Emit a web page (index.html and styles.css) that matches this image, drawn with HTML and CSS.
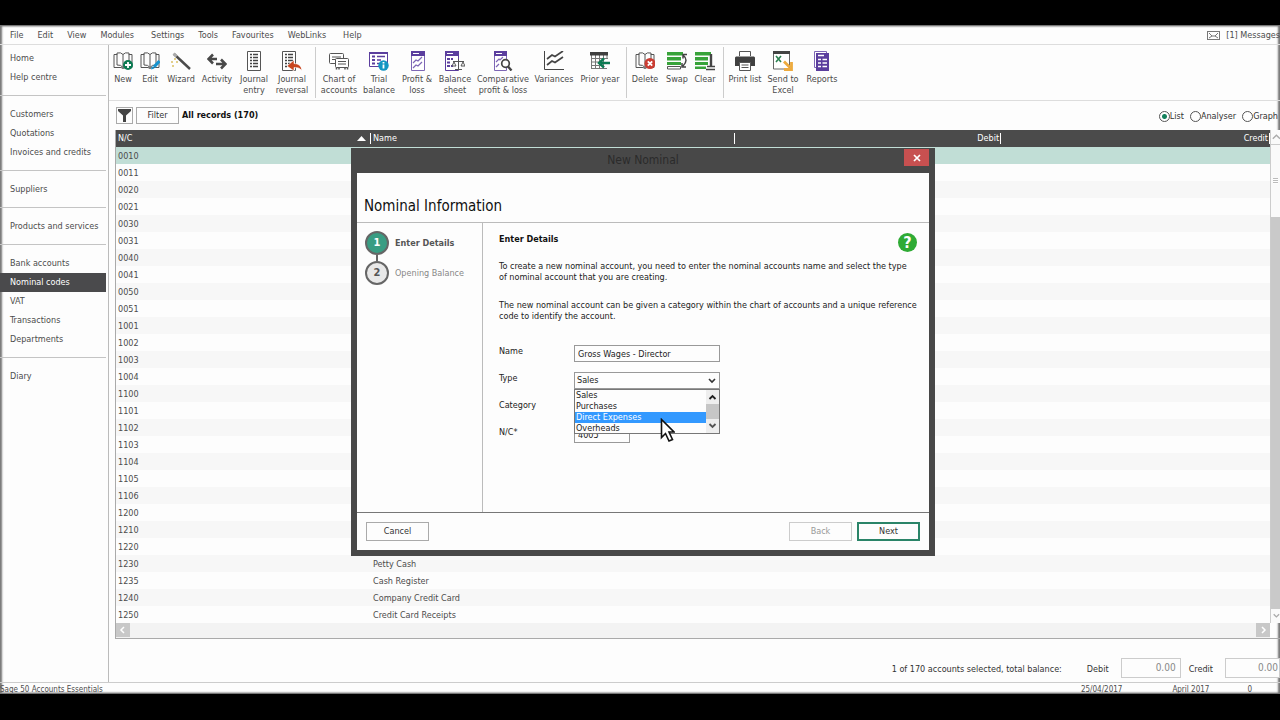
FILE: index.html
```html
<!DOCTYPE html>
<html lang="en">
<head>
<meta charset="utf-8">
<title>Sage 50 Accounts Essentials</title>
<link rel="stylesheet" href="styles.css">
</head>
<body>
<div class="app">
  <header class="menubar">
    <nav class="menus">
      <a href="#">File</a><a href="#">Edit</a><a href="#">View</a><a href="#" class="wide">Modules</a><a href="#">Settings</a><a href="#">Tools</a><a href="#">Favourites</a><a href="#" class="wide">WebLinks</a><a href="#">Help</a>
    </nav>
    <a href="#" class="messages">
      <svg width="13" height="9" viewBox="0 0 13 9" fill="none" stroke="#777"><rect x=".5" y=".5" width="12" height="8"/><path d="M2 2l3 3M11 2L8 5M2 7l3-2h3l3 2"/></svg>
      [1] Messages
    </a>
  </header>

  <div class="main">
    <nav class="sidebar">
      <a href="#">Home</a><a href="#">Help centre</a>
      <hr>
      <a href="#">Customers</a><a href="#">Quotations</a><a href="#">Invoices and credits</a>
      <hr>
      <a href="#">Suppliers</a>
      <hr>
      <a href="#">Products and services</a>
      <hr>
      <a href="#">Bank accounts</a><a href="#" class="current">Nominal codes</a><a href="#">VAT</a><a href="#">Transactions</a><a href="#">Departments</a>
      <hr>
      <a href="#">Diary</a>
    </nav>

    <main class="content">
      <div class="toolbar">
        <div class="group first">
          <button class="w26"><svg viewBox="0 0 20 20"><path d="M1 3.500h3v-1.500q4-1 6 1.500q2-2.500 6-1.500v1.500h3v13h-7l-2 1-2-1H1zM4 3v11q4-.5 6 2.500q2-3 6-2.500V3M10 3.500v13" fill="none" stroke="#555"/><circle cx="15" cy="14" r="5" fill="#0b7a52"/><path d="M15 11v6M12 14h6" stroke="#fff" stroke-width="1.800"/></svg>New</button>
          <button class="w28"><svg viewBox="0 0 20 20"><path d="M1 3.500h3v-1.500q4-1 6 1.500q2-2.500 6-1.500v1.500h3v13h-7l-2 1-2-1H1zM4 3v11q4-.5 6 2.500q2-3 6-2.500V3M10 3.500v13" fill="none" stroke="#555"/><path d="M19.500 10L14 16" stroke="#1593cf" stroke-width="3.200"/><path d="M11 18.500l1-3.500 2.500 2.500z" fill="#1593cf"/></svg>Edit</button>
          <button class="w34"><svg viewBox="0 0 20 20"><path d="M3 3l16 15" stroke="#4b4b4b" stroke-width="2.400"/><path d="M2.500 2.500l3 3" stroke="#aaa" stroke-width="2.600"/><g fill="#e2cf8b"><rect x="3" y="7" width="2" height="2"/><rect x="0" y="10" width="2" height="2"/><rect x="5" y="10" width="2" height="2"/><rect x="1" y="14" width="2" height="2"/></g></svg>Wizard</button>
          <button class="w38"><svg viewBox="0 0 20 20"><path d="M10 8H2M6 3.500L1.500 8 6 12.500M9 13h9M14 8.500l4.500 4.500-4.500 4.500" fill="none" stroke="#484848" stroke-width="2.600"/></svg>Activity</button>
          <button class="w36"><svg viewBox="0 0 20 20"><path d="M3.500.5h13v19h-13z" fill="#fff" stroke="#555"/><path d="M6 3.500h2M6 6.500h2M6 9.500h2M6 12.500h2M6 15.500h2M9 3.500h5M9 6.500h5M9 9.500h5M9 12.500h5M9 15.500h5" stroke="#444" stroke-width="1.400"/></svg>Journal entry</button>
          <button class="w40"><svg viewBox="0 0 20 20"><path d="M.5.500h13v19H.5z" fill="#fff" stroke="#555"/><path d="M3 3.500h2M3 6.500h2M3 9.500h2M3 12.500h2M3 15.500h2M6 3.500h5M6 6.500h5M6 9.500h5M6 12.500h2" stroke="#444" stroke-width="1.400"/><path d="M12 9l-7 6 7 5v-3.500q5-.5 8 3q-1-7-8-7z" fill="#c8461f" stroke="#fff" stroke-width=".6"/></svg>Journal reversal</button>
        </div>
        <div class="group">
          <button class="w46"><svg viewBox="0 0 20 20" fill="#fff" stroke="#555"><rect x=".5" y="2.500" width="14" height="10" rx="1"/><path d="M3 6h9M3 8.500h4"/><rect x="6.500" y="7.500" width="13" height="9" rx="1"/><path d="M9 10.500h8M9 13h8"/><path d="M7.500 16.500v2M10 16.500v2M16 16.500v2M18.500 16.500v2" stroke-width="1.500"/></svg>Chart of accounts</button>
          <button class="w34"><svg viewBox="0 0 20 20"><path d="M.5 1.500h18v14H.5z" fill="#fff" stroke="#5b3e9e"/><path d="M0 1h19v2H0z" fill="#5b3e9e"/><path d="M3 5.500h3M3 9h3M3 12.500h3" stroke="#5b3e9e" stroke-width="2"/><path d="M8 5.500h8M8 9h4M8 12.500h2" stroke="#5b3e9e" stroke-width="1.500"/><circle cx="14.500" cy="14.500" r="5.200" fill="#1395c2"/><path d="M14.500 13.500v4M14.500 11v1.500" stroke="#fff" stroke-width="1.800"/></svg>Trial balance</button>
          <button class="w42"><svg viewBox="0 0 20 20"><path d="M4.500.5h13v19h-13z" fill="#fff" stroke="#7d66b5"/><path d="M4 0h14v5H4z" fill="#5b3e9e"/><path d="M6 2.500h6" stroke="#fff"/><path d="M6 12l3-3 2 1 4-4M6 17l3-3 2 1 4-4" fill="none" stroke="#7d66b5" stroke-width="1.200"/></svg>Profit &amp; loss</button>
          <button class="w34"><svg viewBox="0 0 20 20"><path d="M.5.500h13v19H.5z" fill="#fff" stroke="#5b3e9e"/><path d="M0 0h14v5H0z" fill="#5b3e9e"/><path d="M2 2.500h6" stroke="#fff"/><path d="M2 8h3M2 11.500h3M2 15h3M6 8h2M6 15h2" stroke="#5b3e9e" stroke-width="2"/><path d="M13.500 8v10M10 18.500h7M8 10.500h11M9 11l-2 4h4zM18 11l-2 4h4z" fill="#fff" stroke="#555"/></svg>Balance sheet</button>
          <button class="w62"><svg viewBox="0 0 20 20"><path d="M1.500.5h12v19h-12z" fill="#fff" stroke="#7d66b5"/><path d="M1 0h13v5H1z" fill="#5b3e9e"/><path d="M3 2.500h6" stroke="#fff"/><path d="M3 11l3-3 1 1 3-3M3 16l3-3" fill="none" stroke="#7d66b5" stroke-width="1.200"/><circle cx="12.500" cy="12.500" r="3.800" fill="#fff" stroke="#444" stroke-width="1.700"/><path d="M15 15.500l3.500 4" stroke="#444" stroke-width="2.400"/></svg>Comparative profit &amp; loss</button>
          <button class="w40"><svg viewBox="0 0 20 20" fill="none" stroke="#444"><path d="M.5 0v18.500H20"/><path d="M3 8l5-4 3 1.500L19 0M3 14l5-4 3 1.500L19 6" stroke-width="1.700"/></svg>Variances</button>
          <button class="w52"><svg viewBox="0 0 20 20"><path d="M1.500 3v14M5.500 3v14M9.500 3v14M13.500 3v14M17 3v5M1 7.500h17M1 11h10M1 14.500h10M1 17.500h16" stroke="#777"/><path d="M0 1h18v3.500H0z" fill="#3f3f3f"/><path d="M20 12h-9M14 7.500L9 12l5 4.500" fill="none" stroke="#0b7a52" stroke-width="2.400"/></svg>Prior year</button>
        </div>
        <div class="group last">
          <button class="w36"><svg viewBox="0 0 20 20"><path d="M1 3.500h3v-1.500q4-1 6 1.500q2-2.500 6-1.500v1.500h3v13h-7l-2 1-2-1H1zM4 3v11q4-.5 6 2.500q2-3 6-2.500V3M10 3.500v13" fill="none" stroke="#555"/><circle cx="15" cy="12.500" r="5.500" fill="#ca3c32"/><path d="M12.800 10.300l4.400 4.400M17.200 10.300l-4.400 4.400" stroke="#fff" stroke-width="1.800"/></svg>Delete</button>
          <button class="w28"><svg viewBox="0 0 20 20"><path d="M0 1h16v3.500H0zM0 6h14v3.500H0zM0 11h14v3H0z" fill="#38a33a"/><path d="M.5 15.500h13v2.500H.5z" fill="#fff" stroke="#555"/><path d="M16 4q6 5 0 11M20 3.500h-4v4M15 12v4h4" fill="none" stroke="#444" stroke-width="1.500"/></svg>Swap</button>
          <button class="w28"><svg viewBox="0 0 20 20"><path d="M0 1h16v3.500H0zM0 6h13v3.500H0zM0 11h13v3H0zM0 15.500h11V18H0z" fill="#38a33a"/><path d="M16 3v13" stroke="#444" stroke-width="2.400"/><path d="M12 15.500h8M11 18.500h9" stroke="#444" stroke-width="1.600"/></svg>Clear</button>
        </div>
        <div class="group">
          <button class="w42"><svg viewBox="0 0 20 20"><path d="M4.500 5V.500h11V5" fill="#fff" stroke="#555"/><path d="M1 5.500h18l1 1V15h-4v-3H4v3H0V6.500z" fill="#404040"/><path d="M4.500 11.500h11v8h-11z" fill="#fff" stroke="#555"/><path d="M6.500 14h7M6.500 16.500h7" stroke="#555"/></svg>Print list</button>
          <button class="w34"><svg viewBox="0 0 20 20"><path d="M.5 1h16v17H.5z" fill="#fff" stroke="#666"/><path d="M0 0h17v3H0z" fill="#444"/><path d="M3 5l5 6M8 5l-5 6" stroke="#2a8050" stroke-width="1.600"/><path d="M11 10.500l6 6M18.500 11v7.500h-7.500" fill="none" stroke="#edab3f" stroke-width="2.800"/></svg>Send to Excel</button>
          <button class="w44"><svg viewBox="0 0 20 20"><path d="M2.500.5h12v16h-12z" fill="#fff" stroke="#7d66b5"/><path d="M4 2h13v18H4z" fill="#5b3e9e"/><path d="M6 4.500h6M6 8.500h3M10.500 8.500h4.500M6 12h3M10.500 12h4.500M6 15.500h3M10.500 15.500h4.500" stroke="#fff" stroke-width="1.700"/></svg>Reports</button>
        </div>
      </div>

      <div class="filterbar">
        <button class="box funnel" aria-label="Quick filter"><svg width="13" height="13" viewBox="0 0 13 13"><path d="M0 0h13v2L8 6.500V13H5V6.500L0 2z" fill="#444"/></svg></button>
        <button class="box filter">Filter</button>
        <strong>All records (170)</strong>
        <div class="views">
          <label><input type="radio" name="view" checked>List</label>
          <label><input type="radio" name="view">Analyser</label>
          <label><input type="radio" name="view">Graph</label>
        </div>
      </div>

      <div class="grid">
        <table>
          <colgroup><col class="c-code"><col class="c-name"><col class="c-debit"><col></colgroup>
          <thead><tr><th><div class="sorted">N/C<svg width="9" height="5" viewBox="0 0 9 5"><path d="M0 5l4.500-5L9 5z" fill="#fff"/></svg></div></th><th>Name</th><th class="num">Debit</th><th class="num">Credit</th></tr></thead>
          <tbody>
            <tr class="selected"><td>0010</td><td></td><td></td><td></td></tr>
            <tr><td>0011</td><td></td><td></td><td></td></tr>
            <tr><td>0020</td><td></td><td></td><td></td></tr>
            <tr><td>0021</td><td></td><td></td><td></td></tr>
            <tr><td>0030</td><td></td><td></td><td></td></tr>
            <tr><td>0031</td><td></td><td></td><td></td></tr>
            <tr><td>0040</td><td></td><td></td><td></td></tr>
            <tr><td>0041</td><td></td><td></td><td></td></tr>
            <tr><td>0050</td><td></td><td></td><td></td></tr>
            <tr><td>0051</td><td></td><td></td><td></td></tr>
            <tr><td>1001</td><td></td><td></td><td></td></tr>
            <tr><td>1002</td><td></td><td></td><td></td></tr>
            <tr><td>1003</td><td></td><td></td><td></td></tr>
            <tr><td>1004</td><td></td><td></td><td></td></tr>
            <tr><td>1100</td><td></td><td></td><td></td></tr>
            <tr><td>1101</td><td></td><td></td><td></td></tr>
            <tr><td>1102</td><td></td><td></td><td></td></tr>
            <tr><td>1103</td><td></td><td></td><td></td></tr>
            <tr><td>1104</td><td></td><td></td><td></td></tr>
            <tr><td>1105</td><td></td><td></td><td></td></tr>
            <tr><td>1106</td><td></td><td></td><td></td></tr>
            <tr><td>1200</td><td></td><td></td><td></td></tr>
            <tr><td>1210</td><td></td><td></td><td></td></tr>
            <tr><td>1220</td><td></td><td></td><td></td></tr>
            <tr><td>1230</td><td>Petty Cash</td><td></td><td></td></tr>
            <tr><td>1235</td><td>Cash Register</td><td></td><td></td></tr>
            <tr><td>1240</td><td>Company Credit Card</td><td></td><td></td></tr>
            <tr><td>1250</td><td>Credit Card Receipts</td><td></td><td></td></tr>
          </tbody>
        </table>
        <div class="vscroll">
          <svg class="arrow" viewBox="0 0 10 14"><path d="M2 9l4-4 4 4" fill="none" stroke="#aaa" stroke-width="1.500"/></svg>
          <div class="thumb"><i></i></div>
          <div class="track"></div>
          <svg class="arrow" viewBox="0 0 10 14"><path d="M3 5l3 3 3-3" fill="none" stroke="#aaa" stroke-width="1.500"/></svg>
        </div>
        <div class="hscroll">
          <svg viewBox="0 0 14 14"><path d="M8 4L5 7l3 3" fill="none" stroke="#fff" stroke-width="1.500"/></svg>
          <svg viewBox="0 0 14 14"><path d="M6 4l3 3-3 3" fill="none" stroke="#fff" stroke-width="1.500"/></svg>
        </div>
      </div>

      <div class="totals">
        <span class="summary">1 of 170 accounts selected, total balance:</span>
        <label for="debit">Debit</label><input id="debit" value="0.00" readonly>
        <label for="credit">Credit</label><input id="credit" value="0.00" readonly>
      </div>
    </main>
  </div>

  <footer class="status"><span class="product">Sage 50 Accounts Essentials</span><span>25/04/2017</span><span>April 2017</span><span class="count">0</span></footer>
</div>

<section class="dialog" role="dialog" aria-labelledby="dlg-title">
  <div class="titlebar"><span id="dlg-title">New Nominal</span><button class="close" aria-label="Close"><svg width="8" height="8" viewBox="0 0 8 8"><path d="M1 1l6 6M7 1L1 7" stroke="#fff" stroke-width="1.700"/></svg></button></div>
  <div class="sheet">
    <h1>Nominal Information</h1>
    <div class="wizard">
      <ol class="steps">
        <li class="active"><b>1</b><span>Enter Details</span></li>
        <li><b>2</b><span>Opening Balance</span></li>
      </ol>
      <div class="panel">
        <div class="panel-head"><h2>Enter Details</h2>
          <button class="help" aria-label="Help">?</button></div>
        <p>To create a new nominal account, you need to enter the nominal accounts name and select the type<br>of nominal account that you are creating.</p>
        <p>The new nominal account can be given a category within the chart of accounts and a unique reference<br>code to identify the account.</p>
        <form class="fields">
          <label for="name">Name</label><input id="name" value="Gross Wages - Director">
          <label for="type">Type</label>
          <div class="combo">
            <select id="type"><option>Sales</option><option>Purchases</option><option>Direct Expenses</option><option>Overheads</option></select>
            <svg class="chevron" width="8" height="6" viewBox="0 0 8 6"><path d="M1 1l3 3 3-3" fill="none" stroke="#333" stroke-width="1.600"/></svg>
            <div class="options">
              <ul role="listbox"><li>Sales</li><li>Purchases</li><li class="hover">Direct Expenses</li><li>Overheads</li></ul>
              <div class="optscroll">
                <svg viewBox="0 0 13 14"><path d="M3.500 9l3-3 3 3" fill="none" stroke="#222" stroke-width="1.800"/></svg>
                <i></i>
                <svg viewBox="0 0 13 14"><path d="M3.500 5l3 3 3-3" fill="none" stroke="#555" stroke-width="1.800"/></svg>
              </div>
            </div>
          </div>
          <label for="category">Category</label><select id="category"><option></option></select>
          <label for="nc">N/C*</label><input id="nc" class="short" value="4005">
        </form>
      </div>
    </div>
    <div class="actions"><button class="box">Cancel</button><button class="box back" disabled>Back</button><button class="box next">Next</button></div>
  </div>
</section>
<svg class="pointer" width="15" height="25" viewBox="0 0 15 25"><path d="M1.500 1.500v18l4-4 3.500 7.500 3.500-1.500L9 14h5z" fill="#fff" stroke="#111" stroke-width="1.600"/></svg>
</body>
</html>
```
FILE: styles.css
```css
* { box-sizing: border-box; }
body {
  margin: 0;
  height: 100vh;
  padding: 25px 0 26px;
  background: #000;
  color: #4c4c4c;
  font: 9px/11px "DejaVu Sans Condensed", "DejaVu Sans", sans-serif;
  overflow: hidden;
  position: relative;
}
a { color: inherit; text-decoration: none; }
button, input, select { font: inherit; color: inherit; margin: 0; padding: 0; border-radius: 0; }
button { background: none; border: 0; }
.app {
  height: 100%;
  display: flex;
  flex-direction: column;
  background: #fdfdfd;
  border: solid #777;
  border-width: 1px 0 1px;
  box-shadow: inset 2px 0 2px #777, inset -2px 0 2px #777;
  overflow: hidden;
}
.menubar { flex: none; height: 19px; display: flex; justify-content: space-between; align-items: center; border-bottom: 1px solid #ddd; padding-left: 10px; }
.menus { display: flex; gap: 14px; }
.menus .wide { margin-right: 3px; }
.messages { display: flex; gap: 6px; align-items: center; }

.main { flex: 1; min-height: 0; display: flex; }
.sidebar { flex: none; width: 109px; padding: 4px 2px 0 0; border-right: 1px solid #bbb; }
.sidebar a { display: block; height: 19px; padding-left: 10px; line-height: 19px; }
.sidebar hr { height: 1px; margin: 8px 0 9px; border: 0; background: #c4c4c4; }
.sidebar .current { background: #4a4a4c; color: #fff; }

.content { flex: 1; min-width: 0; display: flex; flex-direction: column; }
.toolbar { flex: none; height: 56px; display: flex; padding: 2px 0 2px 1px; border-bottom: 1px solid #ddd; }
.group { display: flex; align-items: flex-start; border-right: 1px solid #ccc; }
.group.first { padding-right: 3px; }
.group.last { padding-right: 4px; }
.group:last-child { border: 0; }
.group button { display: flex; flex-direction: column; align-items: center; gap: 3px; padding-top: 4px; text-align: center; }
.group svg { width: 20px; height: 20px; }
.w26 { width: 26px; } .w28 { width: 28px; } .w34 { width: 34px; } .w36 { width: 36px; }
.w38 { width: 38px; } .w40 { width: 40px; } .w42 { width: 42px; } .w44 { width: 44px; }
.w46 { width: 46px; } .w52 { width: 52px; } .w62 { width: 62px; }

.filterbar { flex: none; height: 29px; display: flex; align-items: center; gap: 3px; padding: 0 2px 0 7px; color: #333; }
.box { height: 17px; border: 1px solid #aaa; background: #fdfdfd; color: #333; }
.funnel { width: 17px; display: grid; place-items: center; }
.filter { width: 43px; }
.filterbar strong { color: #111; }
.views { margin-left: auto; display: flex; gap: 6px; padding-top: 2px; }
.views label { display: flex; align-items: center; }
.views input { appearance: none; width: 11px; height: 11px; border: 1px solid #555; border-radius: 50%; background: #fff; }
.views input:checked { background: radial-gradient(#14815c 0 2px, #fff 3px); }

.grid { flex: none; margin-left: 6px; display: grid; grid-template: auto 15px / 1fr 10px; border: solid #aaa; border-width: 0 0 1px 1px; }
table { width: 100%; table-layout: fixed; border-collapse: collapse; }
.c-code { width: 22.1%; } .c-name { width: 31.5%; } .c-debit { width: 23.1%; }
th { height: 17px; padding: 0 2px; background: #4b4b4b; color: #fff; font-weight: normal; text-align: left;
  background-image: linear-gradient(#fff, #fff); background-size: 1px 11px; background-position: right 3px; background-repeat: no-repeat; }
.sorted { display: flex; justify-content: space-between; align-items: center; padding-right: 3px; }
.num { text-align: right; }
td { height: 17px; padding: 1px 2px 0; }
tbody tr:nth-child(odd) { background: #f7f7f7; }
tbody .selected:nth-child(odd) { background: #c1ded6; }
.vscroll { display: flex; flex-direction: column; background: #fafafa; border-left: 1px solid #ccc; }
.arrow { height: 14px; flex: none; }
.thumb { height: 73px; display: grid; place-items: center; border-top: 1px solid #ccc; }
.thumb i { width: 5px; height: 6px; background: repeating-linear-gradient(#bbb 0 1px, #fff 1px 2px); }
.track { flex: 1; background: #c9c9c9; }
.hscroll { display: flex; justify-content: space-between; background: #f3f3f3; }
.hscroll svg { width: 14px; height: 14px; background: #c8c8c8; }

.totals { flex: 1; display: flex; align-items: center; justify-content: flex-end; padding-top: 14px; color: #333; }
.totals .summary { margin-right: 25px; }
.totals label { padding-top: 3px; }
.totals .summary { padding-top: 3px; }
.totals input { width: 60px; height: 20px; margin: 0 8px 0 12px; padding-right: 4px; border: 1px solid #ccc; background: #fdfdfd; color: #888; text-align: right; font-size: 10px; }
.totals input:last-child { width: 55px; margin-right: 0; padding-right: 1px; }
.status { flex: none; height: 11px; padding-top: 2px; border-top: 1px solid #ccc; display: flex; font-size: 8px; line-height: 10px; gap: 50px; }
.product { flex: 1; }
.count { padding-right: 28px; margin-left: -12px; }

.dialog { position: absolute; left: 351px; top: 148px; width: 584px; height: 408px; display: flex; flex-direction: column; padding: 0 6px 6px; background: #484848; color: #222; }
.titlebar { flex: none; height: 25px; display: grid; grid-template-columns: 25px 1fr 25px; color: #2b2b2b; font-size: 12px; line-height: 25px; text-align: center; }
.titlebar span { grid-column: 2; }
.close { height: 17px; margin-top: 1px; background: #c75050; display: grid; place-items: center; }
.sheet { flex: 1; display: flex; flex-direction: column; background: #fdfdfd; }
h1 { margin: 0; height: 50px; padding: 23px 7px 0; border-bottom: 1px solid #bbb; font-size: 15px; line-height: 20px; font-weight: normal; color: #111; }
.wizard { flex: 1; display: flex; }
.steps { width: 126px; margin: 0; padding: 8px; list-style: none; border-right: 1px solid #bbb; color: #888; }
.steps li { display: flex; align-items: center; gap: 6px; height: 24px; margin-bottom: 6px; position: relative; }
.steps b { width: 24px; height: 24px; border: 2px solid #666; border-radius: 50%; background: #e8e8e8; color: #555; font-size: 11px; line-height: 20px; text-align: center; }
.steps .active { font-weight: bold; color: #555; }
.steps .active b { background: #399d83; color: #fff; }
.steps .active::after { content: ""; position: absolute; left: 11px; top: 24px; width: 2px; height: 6px; background: #666; }
.panel { flex: 1; padding: 10px 12px 0 16px; }
.panel-head { display: flex; justify-content: space-between; height: 28px; }
h2 { margin: 0; font-size: 9px; line-height: 13px; color: #111; }
.help { width: 19px; height: 19px; border-radius: 50%; background: #2fab35; color: #fff; font-size: 16px; line-height: 19px; font-weight: bold; }
.panel p { margin: 0 0 17px; white-space: nowrap; }
.fields { display: grid; grid-template-columns: 75px 146px; grid-auto-rows: 17px; gap: 10px 0; margin-top: 23px; }
.fields label { padding-top: 1px; }
.fields input, .fields select { width: 100%; height: 17px; border: 1px solid #999; background: #fdfdfd; padding: 0 3px; }
.fields select { appearance: none; padding: 0 2px; }
.fields .short { width: 56px; }
.combo { position: relative; }
.chevron { position: absolute; right: 4px; top: 6px; }
.options { position: absolute; z-index: 1; top: 17px; left: 0; right: 0; height: 45px; display: flex; border: 1px solid #777; background: #fdfdfd; }
.options ul { flex: 1; margin: 0; padding: 0; list-style: none; }
.options li { padding-left: 1px; height: 11px; }
.options .hover { background: #3399ff; color: #fff; }
.optscroll { width: 13px; display: flex; flex-direction: column; background: #eee; }
.optscroll svg { height: 14px; }
.optscroll i { flex: 1; background: #c6c6c6; }
.actions { flex: none; height: 38px; display: flex; align-items: center; gap: 5px; padding: 0 9px; border-top: 1px solid #777; }
.actions .box { width: 63px; height: 19px; }
.actions .back { margin-left: auto; border-color: #ccc; color: #999; }
.actions .next { border: 2px solid #2a8468; }
.pointer { position: absolute; z-index: 2; left: 660px; top: 418px; }
```
